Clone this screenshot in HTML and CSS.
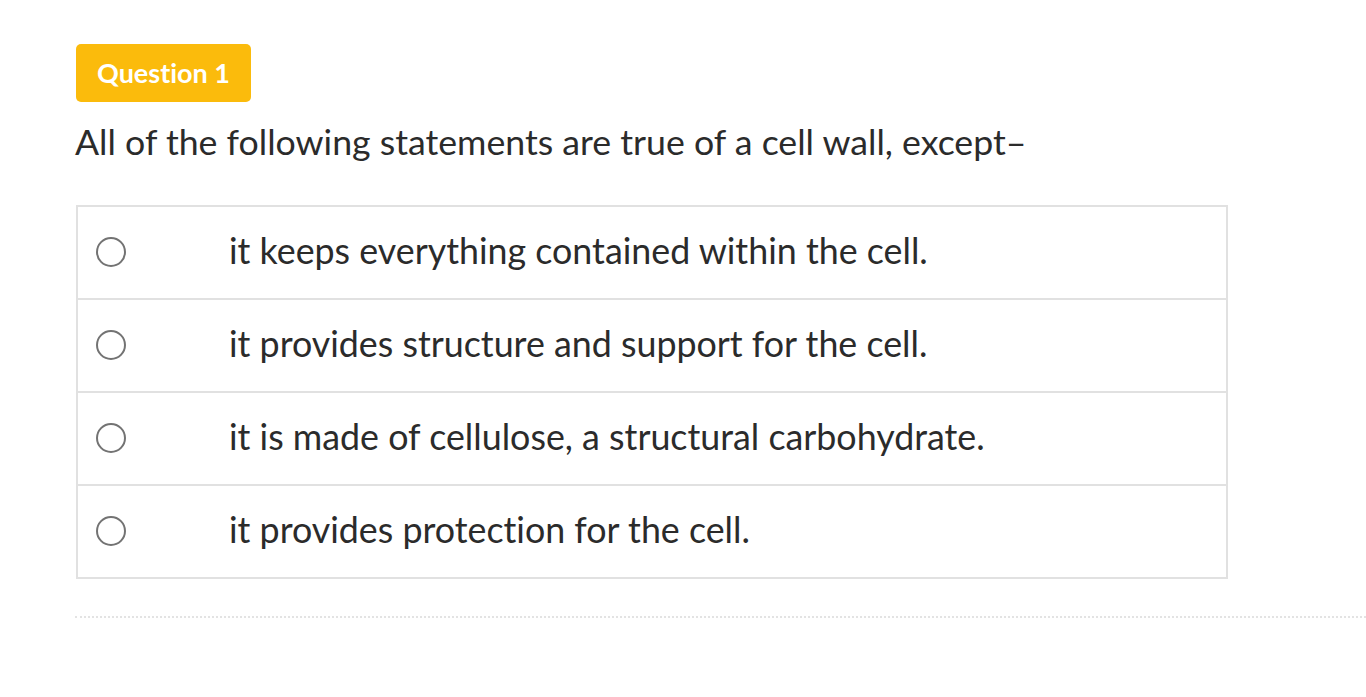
FILE: index.html
```html
<!DOCTYPE html>
<html>
<head>
<meta charset="utf-8">
<link rel="stylesheet" href="styles.css">
</head>
<body>
<div class="page">
  <div class="badge">Question 1</div>
  <p class="question">All of the following statements are true of a cell wall, except–</p>
  <div class="options">
    <div class="option"><span class="radio"></span><span class="label">it keeps everything contained within the cell.</span></div>
    <div class="option"><span class="radio"></span><span class="label">it provides structure and support for the cell.</span></div>
    <div class="option"><span class="radio"></span><span class="label">it is made of cellulose, a structural carbohydrate.</span></div>
    <div class="option"><span class="radio"></span><span class="label">it provides protection for the cell.</span></div>
  </div>
  <div class="divider"></div>
</div>
</body>
</html>
```
FILE: styles.css
```css
html, body {
  margin: 0;
  padding: 0;
  background: #fff;
}
body {
  font-family: Lato, "Open Sans", sans-serif;
  color: #2b2b2b;
  font-variant-ligatures: none;
  font-feature-settings: "liga" 0, "clig" 0;
}
.page {
  padding: 44px 0 0 75px;
}
.badge {
  display: inline-flex;
  align-items: center;
  height: 58px;
  margin-left: 1px;
  padding: 0 21px 1px;
  background: #fbbb0c;
  color: #fff;
  font-weight: 700;
  font-size: 27px;
  border-radius: 5px;
  box-sizing: border-box;
}
.question {
  margin: 18px 0 0 0;
  font-size: 35.7px;
  line-height: 44px;
}
.options {
  margin: 41px 0 0 1px;
  width: 1152px;
  border: 2px solid #e1e1e1;
  box-sizing: border-box;
}
.option {
  display: flex;
  align-items: center;
  height: 93px;
  border-top: 2px solid #e1e1e1;
  box-sizing: border-box;
}
.option:first-child {
  border-top: none;
  height: 91px;
}
.radio {
  width: 30px;
  height: 30px;
  border: 2px solid #737373;
  border-radius: 50%;
  box-sizing: border-box;
  margin-left: 18px;
  margin-bottom: 2px;
  flex: none;
}
.label {
  margin-left: 103px;
  margin-bottom: 4px;
  font-size: 35.8px;
}
.divider {
  margin-top: 37px;
  border-top: 2px dotted #e3e3e3;
}
```
